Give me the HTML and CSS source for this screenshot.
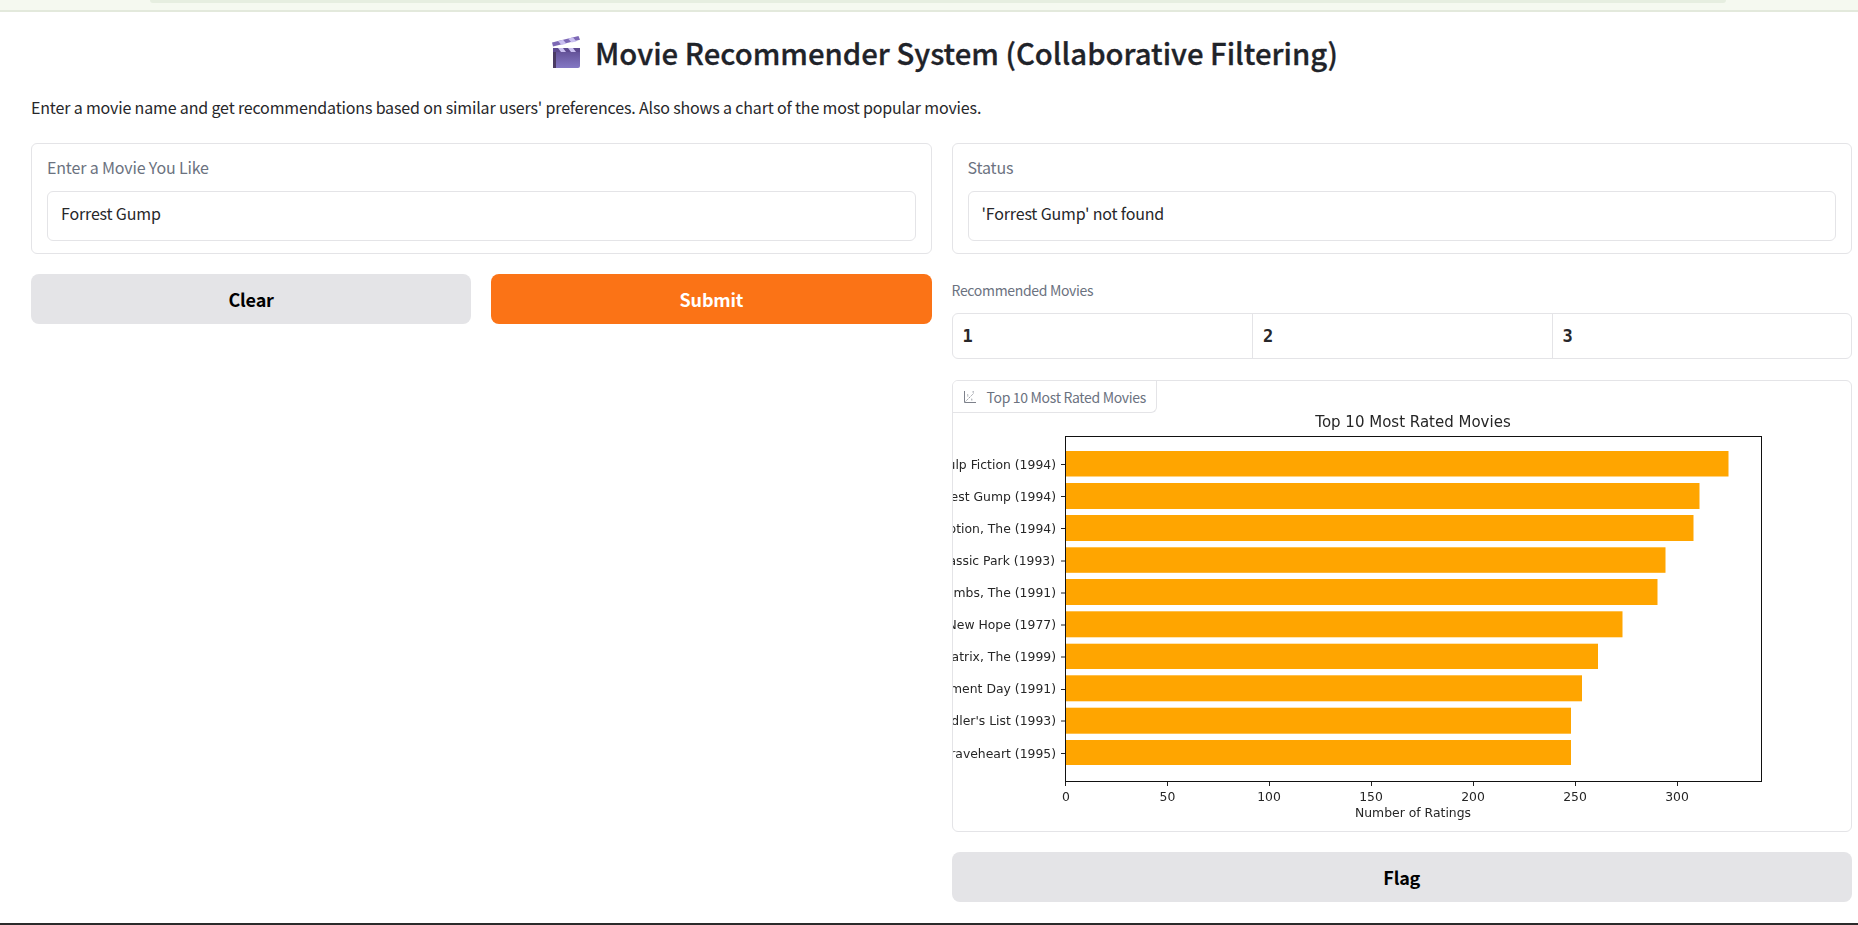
FILE: index.html
```html
<!DOCTYPE html>
<html lang="en">
<head>
    <meta charset="UTF-8">
    <meta name="viewport" content="width=device-width, initial-scale=1.0">
    <title>Movie Recommender System</title>
    <link rel="stylesheet" href="styles.css">
</head>
<body>
    <div class="top-strip"><div class="top-pill"></div></div>

    <main class="page">
        <h1 class="title">
            <svg class="clapper" viewBox="0 0 28 32" aria-hidden="true">
                <defs>
                    <linearGradient id="clapBody" x1="0" y1="0" x2="0" y2="1">
                        <stop offset="0" stop-color="#5d4a8f"/>
                        <stop offset="1" stop-color="#8478c4"/>
                    </linearGradient>
                </defs>
                <path d="M1 12h27v18a2 2 0 0 1-2 2H3a2 2 0 0 1-2-2z" fill="url(#clapBody)"/>
                <rect x="1" y="12" width="3" height="20" fill="#4a3a63"/>
                <rect x="1" y="12" width="27" height="4" fill="#5d4a8f"/>
                <path d="M6 12l3 4h5l-3-4zM16 12l3 4h5l-3-4z" fill="#c9bff0"/>
                <path d="M0 6.500L26.500 0l1.500 3.800L1 10.500z" fill="#7d68b5"/>
                <path d="M6 5l5-1.200 3.500 4-5 1.200zM16 2.600l5-1.200 3.500 4-5 1.200z" fill="#c9bff0"/>
            </svg>
            Movie Recommender System (Collaborative Filtering)
        </h1>
        <p class="intro">Enter a movie name and get recommendations based on similar users' preferences. Also shows a chart of the most popular movies.</p>

        <div class="columns">
            <div class="col">
                <section class="card">
                    <label class="field-label">Enter a Movie You Like</label>
                    <div class="field-box">Forrest Gump</div>
                </section>
                <div class="button-row">
                    <button class="btn btn-grey">Clear</button>
                    <button class="btn btn-orange">Submit</button>
                </div>
            </div>

            <div class="col">
                <section class="card">
                    <label class="field-label">Status</label>
                    <div class="field-box">'Forrest Gump' not found</div>
                </section>

                <div class="recommended">
                    <div class="small-label">Recommended Movies</div>
                    <table class="rec-table">
                        <tr>
                            <th>1</th>
                            <th>2</th>
                            <th>3</th>
                        </tr>
                    </table>
                </div>

                <section class="plot-card">
                    <div class="plot-tab">
                        <svg class="plot-icon" viewBox="0 0 12 12" aria-hidden="true">
                            <path d="M.5 0v11.500H12" fill="none" stroke="#7d818b" stroke-width="1"/>
                            <path d="M1.500 10.500L10 2" fill="none" stroke="#8f939b" stroke-width=".9" stroke-dasharray="1.600 .8"/>
                            <path d="M3 5h1.500M3.700 3v1.500M7 9h1.500M7.700 7.500V9M8.500 1h1.500M9.200 0v1.500" fill="none" stroke="#a5a8af" stroke-width=".8"/>
                        </svg>
                        Top 10 Most Rated Movies
                    </div>
                    <svg class="chart" viewBox="953 381 898 450" role="img">
                        <g class="bars">
                            <rect x="1065.500" y="451" width="663" height="25.500"/>
                            <rect x="1065.500" y="483" width="634" height="26"/>
                            <rect x="1065.500" y="515" width="628" height="26"/>
                            <rect x="1065.500" y="547.300" width="600" height="25.500"/>
                            <rect x="1065.500" y="579" width="592" height="26"/>
                            <rect x="1065.500" y="611.300" width="557" height="26"/>
                            <rect x="1065.500" y="643.700" width="532.500" height="25.300"/>
                            <rect x="1065.500" y="675.300" width="516.500" height="26"/>
                            <rect x="1065.500" y="707.700" width="505.500" height="26"/>
                            <rect x="1065.500" y="740" width="505.500" height="25"/>
                        </g>

                        <rect class="frame" x="1065.500" y="436.500" width="696" height="345"/>

                        <g class="ticks">
                            <path d="M1061 464.500h4M1061 496.500h4M1061 528.500h4M1061 561h4M1061 593h4M1061 625h4M1061 657h4M1061 689.500h4M1061 721h4M1061 753.500h4"/>
                            <path d="M1065.500 782v4M1167.500 782v4M1269.500 782v4M1371.500 782v4M1473.500 782v4M1575.500 782v4M1677.500 782v4"/>
                        </g>

                        <g class="chart-text">
                            <text class="chart-title" x="1413" y="427">Top 10 Most Rated Movies</text>

                            <g class="y-labels">
                                <text x="1056" y="468.500">Pulp Fiction (1994)</text>
                                <text x="1056" y="500.500">Forrest Gump (1994)</text>
                                <text x="1056" y="532.500">Shawshank Redemption, The (1994)</text>
                                <text x="1055" y="564.500">Jurassic Park (1993)</text>
                                <text x="1056" y="597">Silence of the Lambs, The (1991)</text>
                                <text x="1056" y="629">Star Wars: Episode IV - A New Hope (1977)</text>
                                <text x="1056" y="661">Matrix, The (1999)</text>
                                <text x="1056" y="693">Terminator 2: Judgment Day (1991)</text>
                                <text x="1056" y="725">Schindler's List (1993)</text>
                                <text x="1056" y="757.500">Braveheart (1995)</text>
                            </g>

                            <g class="x-labels">
                                <text x="1066" y="800.500">0</text>
                                <text x="1167.500" y="800.500">50</text>
                                <text x="1269" y="800.500">100</text>
                                <text x="1371" y="800.500">150</text>
                                <text x="1473" y="800.500">200</text>
                                <text x="1575" y="800.500">250</text>
                                <text x="1677" y="800.500">300</text>
                                <text x="1413" y="817">Number of Ratings</text>
                            </g>
                        </g>
                    </svg>
                </section>

                <button class="btn btn-grey">Flag</button>
            </div>
        </div>
    </main>

    <div class="bottom-line"></div>
</body>
</html>
```

FILE: styles.css
```css
html, body {
    height: 100%;
}

body {
    margin: 0;
    display: flex;
    flex-direction: column;
    overflow: hidden;
    background-color: #ffffff;
    color: #27272a;
    font-family: "Noto Sans CJK SC", "Noto Sans", sans-serif;
}

.top-strip {
    height: 10px;
    flex-shrink: 0;
    padding: 0 132px 0 150px;
    background-color: #f5f9f0;
    border-bottom: 2px solid #e3e9dc;
}

.top-pill {
    height: 3px;
    background-color: #e6eee0;
    border-radius: 0 0 8px 8px;
}

.page {
    flex: 1;
    padding: 0 6px 0 31px;
}

.title {
    display: flex;
    justify-content: center;
    align-items: center;
    gap: 15px;
    margin: 0;
    padding: 18px 0 0 7px;
    height: 44px;
    font-size: 29.300px;
    font-weight: 500;
    -webkit-text-stroke: 0.3px #1f2329;
    line-height: 44px;
    color: #1f2329;
}

.clapper {
    width: 28px;
    height: 32px;
}

.intro {
    margin: 22px 0 0;
    font-size: 16px;
    letter-spacing: -0.01em;
    line-height: 22px;
}

.columns {
    display: grid;
    grid-template-columns: 1fr 1fr;
    gap: 20px;
    margin-top: 25px;
}

.col {
    display: flex;
    flex-direction: column;
    gap: 20px;
}

.card {
    height: 111px;
    box-sizing: border-box;
    padding: 12px 15px;
    border: 1px solid #e4e4e7;
    border-radius: 6px;
}

.field-label {
    display: block;
    font-size: 16px;
    letter-spacing: -0.01em;
    line-height: 22px;
    color: #6b7280;
}

.field-box {
    height: 50px;
    box-sizing: border-box;
    margin-top: 13px;
    padding: 0 13px;
    border: 1px solid #e4e4e7;
    border-radius: 6px;
    font-size: 16px;
    letter-spacing: -0.01em;
    line-height: 42px;
}

.button-row {
    display: grid;
    grid-template-columns: 1fr 1fr;
    gap: 20px;
}

.btn {
    height: 50px;
    border: none;
    border-radius: 8px;
    font-family: inherit;
    font-size: 18px;
    font-weight: 600;
    letter-spacing: -0.01em;
    cursor: pointer;
}

.btn-grey {
    background-color: #e4e4e7;
    color: #000000;
}

.btn-orange {
    background-color: #fb7316;
    color: #ffffff;
}

.small-label {
    font-size: 14px;
    letter-spacing: -0.023em;
    line-height: 20px;
    margin-top: 6px;
    color: #6b7280;
}

.rec-table {
    width: 100%;
    height: 46px;
    margin-top: 13px;
    table-layout: fixed;
    border-collapse: separate;
    border-spacing: 0;
    border: 1px solid #e4e4e7;
    border-radius: 6px;
}

.rec-table th {
    padding: 0 0 0 10px;
    border-left: 1px solid #e4e4e7;
    font-family: "DejaVu Sans Mono", monospace;
    font-size: 17px;
    font-weight: 700;
    text-align: left;
}

.rec-table th:first-child {
    border-left: none;
}

.plot-card {
    position: relative;
    height: 452px;
    box-sizing: border-box;
    margin-top: 1px;
    border: 1px solid #e4e4e7;
    border-radius: 6px;
    overflow: hidden;
}

.plot-tab {
    position: absolute;
    top: 0;
    left: 0;
    display: flex;
    align-items: center;
    gap: 11px;
    height: 32px;
    box-sizing: border-box;
    padding: 0 10px 0 11px;
    border-right: 1px solid #e4e4e7;
    border-bottom: 1px solid #e4e4e7;
    border-radius: 0 0 6px 0;
    font-size: 14px;
    letter-spacing: -0.023em;
    color: #6b7280;
    background-color: #ffffff;
}

.plot-icon {
    width: 12px;
    height: 12px;
}

.chart {
    display: block;
    width: 898px;
    height: 450px;
    font-family: "DejaVu Sans", sans-serif;
    font-size: 12.400px;
    fill: #262626;
}

/* the chart in the reference is a resampled picture, so its text is a little soft */
.chart-text {
    filter: blur(0.3px);
}

.chart-title {
    font-size: 15px;
    text-anchor: middle;
}

.bars rect {
    fill: #ffa500;
}

.frame {
    fill: none;
    stroke: #111111;
    stroke-width: 1;
}

.ticks path {
    fill: none;
    stroke: #222222;
    stroke-width: 1;
}

.y-labels text {
    text-anchor: end;
}

.x-labels text {
    text-anchor: middle;
}

.bottom-line {
    height: 2px;
    flex-shrink: 0;
    background-color: #2b2b2b;
}
```
